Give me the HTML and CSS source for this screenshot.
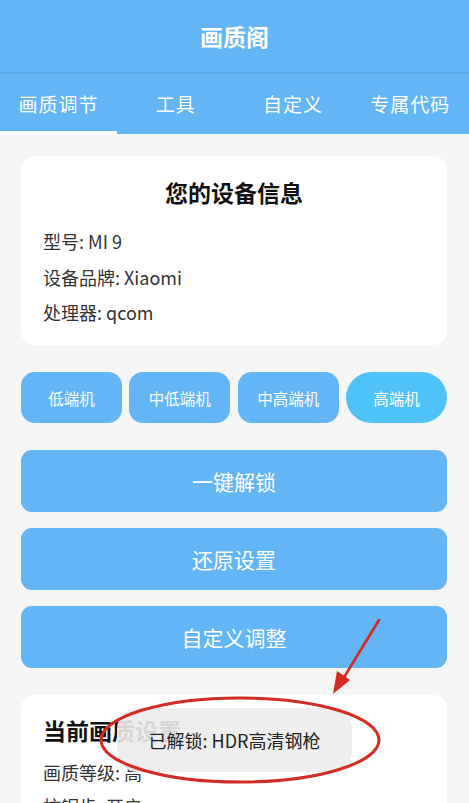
FILE: index.html
```html
<!DOCTYPE html>
<html lang="zh-CN">
<head>
<meta charset="utf-8">
<title>画质阁</title>
<link rel="stylesheet" href="styles.css">
</head>
<body>
<div class="app">
  <header class="appbar">画质阁</header>
  <nav class="tabs">
    <div class="tab active">画质调节</div>
    <div class="tab">工具</div>
    <div class="tab">自定义</div>
    <div class="tab">专属代码</div>
  </nav>
  <main class="content">
    <section class="card info">
      <h2 class="card-title center">您的设备信息</h2>
      <p class="line">型号: MI 9</p>
      <p class="line">设备品牌: Xiaomi</p>
      <p class="line">处理器: qcom</p>
    </section>
    <div class="levels">
      <button class="level">低端机</button>
      <button class="level">中低端机</button>
      <button class="level">中高端机</button>
      <button class="level selected">高端机</button>
    </div>
    <div class="actions">
      <button class="action">一键解锁</button>
      <button class="action">还原设置</button>
      <button class="action">自定义调整</button>
    </div>
    <section class="card current">
      <h2 class="card-title">当前画质设置</h2>
      <p class="line">画质等级: 高</p>
      <p class="line">抗锯齿: 开启</p>
    </section>
  </main>
  <div class="toast">已解锁: HDR高清钢枪</div>
  <svg class="annot" width="469" height="803" viewBox="0 0 469 803">
    <ellipse cx="240" cy="740" rx="139" ry="42" fill="none" stroke="#d42a22" stroke-width="3"/>
    <path d="M379 620 L343 679" stroke="#d42a22" stroke-width="2.6" stroke-linecap="round"/>
    <path d="M333 694 L337 671 L350 680 Z" fill="#d42a22"/>
  </svg>
</div>
</body>
</html>
```

FILE: styles.css
```css
* { box-sizing: border-box; }
html, body {
  margin: 0;
  padding: 0;
  background: #f5f5f5;
  font-family: "Noto Sans CJK SC", Roboto, sans-serif;
}
.app {
  position: relative;
  width: 469px;
  height: 803px;
  overflow: hidden;
  background: #f5f5f5;
}
.appbar {
  height: 72px;
  background: #64b5f6;
  color: #fff;
  font-size: 23px;
  font-weight: 700;
  display: flex;
  align-items: center;
  justify-content: center;
  box-shadow: 0 1px 2px rgba(0,0,0,0.12);
  position: relative;
  z-index: 1;
}
.tabs {
  height: 62px;
  background: #64b5f6;
  display: grid;
  grid-template-columns: repeat(4, 1fr);
}
.tab {
  color: #fff;
  font-size: 19px;
  letter-spacing: 1px;
  display: flex;
  align-items: center;
  justify-content: center;
  padding-top: 3px;
  border-bottom: 3px solid transparent;
  white-space: nowrap;
}
.tab.active { border-bottom-color: #fff; }
.content {
  padding: 22px 22px 0 21px;
  display: flex;
  flex-direction: column;
}
.card {
  background: #fff;
  border-radius: 14px;
  padding: 21px 22px 14px;
}
.card-title {
  margin: 0 0 17px;
  font-size: 23px;
  line-height: 30px;
  font-weight: 700;
  color: #111;
}
.card-title.center { text-align: center; }
.line {
  margin: 0;
  font-size: 18px;
  line-height: 35.5px;
  color: #333;
}
.info { height: 189px; }
.levels {
  margin-top: 27px;
  display: grid;
  grid-template-columns: repeat(4, 1fr);
  gap: 7.5px;
}
button {
  font-family: inherit;
  border: none;
  color: #fff;
  padding: 0;
}
.level {
  height: 51px;
  background: #64b5f6;
  border-radius: 14px;
  font-size: 15.5px;
}
.level.selected {
  background: #4fc3f7;
  border-radius: 26px;
}
.actions {
  margin-top: 27px;
  display: flex;
  flex-direction: column;
  gap: 16px;
}
.action {
  height: 62px;
  background: #64b5f6;
  border-radius: 11px;
  font-size: 21px;
}
.current {
  margin-top: 27px;
  padding-top: 20px;
}
.current .card-title { margin-bottom: 10px; }
.current .line { line-height: 34px; }
.toast {
  position: absolute;
  left: 117px;
  top: 708px;
  width: 235px;
  height: 64px;
  border-radius: 21px;
  background: rgba(236,236,236,0.9);
  color: #222;
  font-size: 18px;
  display: flex;
  align-items: center;
  justify-content: center;
  white-space: nowrap;
}
.annot {
  position: absolute;
  left: 0;
  top: 0;
  pointer-events: none;
}
```
